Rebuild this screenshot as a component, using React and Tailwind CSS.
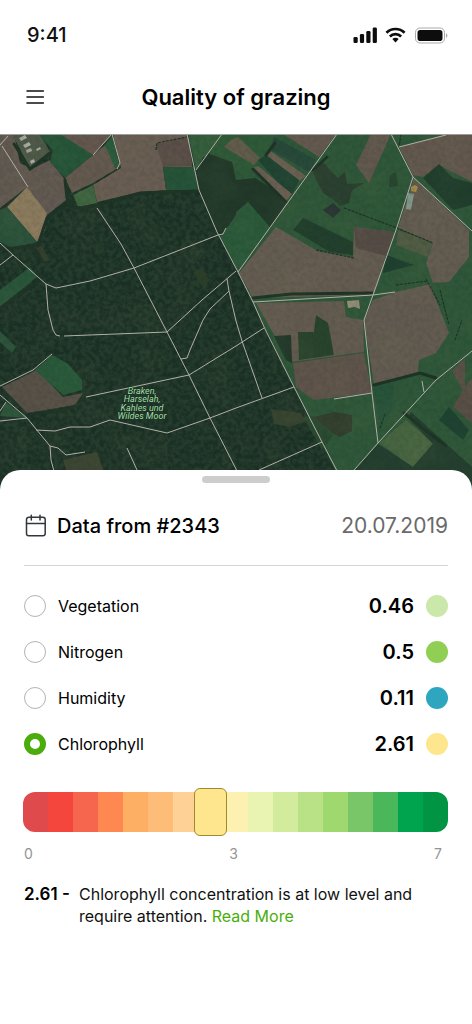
import { useState } from "react";

const readings = [
  { name: "Vegetation", value: "0.46", dot: "bg-[#cae8a9]" },
  { name: "Nitrogen", value: "0.5", dot: "bg-[#91cf54]" },
  { name: "Humidity", value: "0.11", dot: "bg-[#2fa6c0]" },
  { name: "Chlorophyll", value: "2.61", dot: "bg-[#fee68e]" },
];

const scale = [
  "bg-[#df4b4c]", "bg-[#f4463c]", "bg-[#f6664f]", "bg-[#fe8850]", "bg-[#fdb063]",
  "bg-[#fdbd78]", "bg-[#fed196]", "bg-[#fde68e]", "bg-[#fdf1b1]", "bg-[#e9f4b3]",
  "bg-[#d3eb9c]", "bg-[#b9e286]", "bg-[#a0d870]", "bg-[#78c667]", "bg-[#4ab75b]",
  "bg-[#01a44e]", "bg-[#019443]",
];
const selectedStep = 7;

const fields = [
  ["#2f5739", "222,134 472,134 472,490 345,490 294,387 238,272 220,237 236,215 236,183 209,153"],
  ["#635a52", "0,134 14,134 20,163 32,169 50,160 65,180 66,200 47,215 27,187 0,208"],
  ["#4f5949", "12,134 40,134 50,152 30,168"],
  ["#8c7b5e", "27,187 47,213 45,230 37,242 7,207"],
  ["#2a523b", "7,207 37,242 12,248 0,242 0,210"],
  ["#265639", "38,134 63,134 93,155 65,178 50,162 53,150"],
  ["#64574e", "60,134 112,134 93,155"],
  ["#64594f", "93,155 105,145 118,168 93,183 72,193 65,178"],
  ["#2c5c3d", "105,145 112,136 120,167 115,168"],
  ["#6a5e53", "113,134 187,134 192,167 163,167 166,190 140,192 97,202 93,185 121,168"],
  ["#5c5049", "156,144 189,137 192,166 163,167"],
  ["#255339", "163,167 194,167 199,190 166,190"],
  ["#3f6540", "73,195 93,185 97,203 78,207"],
  ["#345e3c", "188,134 222,134 196,170"],
  ["#2f5a38", "222,134 280,134 266,155 245,180 233,165 209,153"],
  ["#625c4b", "231,140 238,137 260,158 254,165 224,147"],
  ["#22392a", "197,170 203,157 212,155 232,162 236,180 255,178 270,187 287,202 270,228 248,202 236,212 222,234 217,230 201,196"],
  ["#2b5a3a", "236,218 248,202 269,226 240,268 221,237"],
  ["#2a563b", "0,290 30,267 37,277 0,307"],
  ["#64594f", "283,134 336,134 319,157"],
  ["#27493a", "274,137 316,160 309,172 271,150"],
  ["#6a5f52", "269,150 306,176 299,181 266,155"],
  ["#1f4332", "258,160 266,155 299,180 291,197"],
  ["#6a5f52", "252,168 258,166 292,194 286,201"],
  ["#62584d", "371,134 391,134 369,183 356,165"],
  ["#2b4030", "313,173 322,161 331,171 338,178 345,172 347,184 364,183 352,190 349,203 340,206 334,200 323,193"],
  ["#293534", "323,210 333,203 341,210 333,218"],
  ["#22402d", "293,230 303,218 320,226 353,242 353,255 330,252"],
  ["#26452f", "390,175 396,172 398,186 389,187"],
  ["#655c51", "276,227 316,250 353,257 354,227 394,232 373,295 253,298 239,273"],
  ["#564c46", "354,227 394,232 386,256 356,248"],
  ["#63584e", "399,147 449,134 472,134 472,182 439,165 423,177 413,175"],
  ["#213e2d", "423,178 439,164 453,178 472,183 472,205 453,210"],
  ["#645c51", "414,178 469,230 469,257 449,282 433,283 426,263 433,243 398,228"],
  ["#505b44", "398,230 433,243 428,257 396,245"],
  ["#1f4030", "386,255 414,265 383,273"],
  ["#645b50", "256,303 344,301 346,317 363,320 364,352 291,362 273,333"],
  ["#5f544b", "293,363 364,353 372,393 314,400 296,387"],
  ["#22392b", "274,336 291,335 292,363 286,360"],
  ["#29442d", "298,332 314,332 316,315 328,323 334,355 299,360"],
  ["#635b51", "373,300 396,292 430,284 449,333 436,353 419,360 418,373 374,385 364,320"],
  ["#28533b", "374,386 394,382 391,412 379,424"],
  ["#323f2e", "314,417 334,412 352,415 352,431 340,437 333,434"],
  ["#2a4a31", "303,417 314,416 333,435 322,450"],
  ["#476541", "379,443 406,420 433,443 413,467"],
  ["#243f2f", "354,470 378,444 413,467 433,444 408,418 411,412 472,467 472,490 340,490"],
  ["#594f46", "452,371 465,358 465,387 472,378 472,423 453,407 463,390"],
  ["#1f4332", "449,407 469,430 463,440 439,420"],
  ["#585148", "2,387 37,370 63,397 83,393 75,405 27,413"],
  ["#295a3a", "35,370 52,355 67,363 82,380 82,390 63,395"],
  ["#2c563d", "0,416 6,402 27,418"],
  ["#2b533b", "0,331 16,347 12,353 0,342"],
  ["#3d4633", "63,460 97,452 103,470 67,472"],
  ["#35432f", "271,409 300,413 307,421 290,427 274,424"],
  ["#343f2e", "36,248 42,246 49,260 42,262"],
  ["#2b3f2a", "193,272 203,268 209,280 204,290"],
];

const treeLines = [
  "M0 249 12 248 30 246 37 252 43 262",
  "M38 245 47 218 65 205 80 208 97 205 140 193 198 191",
  "M14 144 30 169 50 153",
  "M65 180 67 198 75 208",
  "M253 298 291 294 372 293",
  "M374 385 420 373 436 378",
  "M27 415 60 411 75 406",
  "M253 169 286 202 M266 155 275 143 M313 170 327 157",
  "M404 413 425 430 446 446",
  "M0 308 38 281 48 272",
];

const thinHedges = [
  "M316 250 354 258",
  "M344 208 397 228 433 243",
  "M396 285 427 281 M426 279 440 305",
  "M440 290 449 325 M455 340 462 320",
  "M156 150 157 143 187 137",
  "M385 414 380 428 M401 134 399 147",
];

const roads = [
  "M0 243 13 255 46 284 56 288 90 281 134 268 218 235 223 234 226 228",
  "M97 208 121 244 134 268 167 332 189 375 210 418 236 469 246 490",
  "M187 134 199 190 217 232 238 272 253 302 265 329 294 387 322 442 347 490",
  "M222 134 196 170",
  "M0 145 8 136 M2 146 28 187",
  "M112 134 93 155 M112 134 120 163 117 169",
  "M0 265 13 255",
  "M46 284 48 310 53 330 56 335 60 336 M64 336 167 332 202 300 236 271",
  "M227 279 229 291 236 321 242 341 262 398",
  "M229 291 210 309 203 320 190 350 187 358 181 359",
  "M189 375 236 346 264 328",
  "M86 397 189 375",
  "M210 418 236 408 294 387",
  "M36 430 55 431 70 427 90 427 110 420 167 433 210 418",
  "M0 395 27 418 50 446 51 460 55 475",
  "M50 446 58 448 66 455 85 452",
  "M0 421 27 418 M0 386 33 370 52 354 M6 402 0 411",
  "M127 448 137 470",
  "M259 470 322 442",
  "M337 134 238 272",
  "M391 134 413 177 472 231",
  "M413 177 396 230 373 295 364 320 372 393 378 443",
  "M399 147 446 135",
  "M253 302 373 295 395 292",
  "M334 399 372 393",
  "M340 486 378 443 436 380 472 351",
  "M424 392 422 381",
];

function SatelliteMap() {
  return (
    <svg
      className="block w-full"
      viewBox="0 134 472 356"
      role="img"
      aria-label="Satellite map of the pasture"
    >
      <defs>
        <filter id="canopy" x="0" y="0" width="100%" height="100%" colorInterpolationFilters="sRGB">
          <feTurbulence type="fractalNoise" baseFrequency="0.22" numOctaves="4" seed="8" />
          <feColorMatrix values="0 0 0 0 0.05  0 0 0 0 0.12  0 0 0 0 0.09  3 1.5 0 0 -1.8" />
        </filter>
        <filter id="soil" x="0" y="0" width="100%" height="100%" colorInterpolationFilters="sRGB">
          <feTurbulence type="fractalNoise" baseFrequency="0.03" numOctaves="3" seed="3" />
          <feColorMatrix values="0 0 0 0 0.55  0 0 0 0 0.55  0 0 0 0 0.38  2 0 0 0 -0.8" />
        </filter>
        <filter id="soften" colorInterpolationFilters="sRGB">
          <feGaussianBlur stdDeviation="0.7" />
        </filter>
      </defs>
      <rect y="134" width="472" height="356" fill="#243b2d" />
      <rect y="134" width="472" height="356" filter="url(#canopy)" opacity="0.35" />
      <g filter="url(#soften)">
        {fields.map(([fill, points], i) => (
          <polygon key={i} fill={fill} points={points} />
        ))}
        <g fill="#a9aca2">
          <path d="M19 138l6-3 2 3-6 3zM23 145l6-3 2 3-6 3zM26 150l5-2 1 3-5 2zM30 161l4-2 1 3-4 2zM36 149l4-2 1 2-4 2z" />
        </g>
        <path d="M411 187l4-2 3 2-2 5-5-1z" fill="#a28a48" />
        <path d="M408 193l6 1-3 16-5-1z" fill="#80988a" />
        <path d="M347 301l12-1 1 9-5-2-7 1z" fill="#958d78" />
        <g fill="none" stroke="#1e3426">
          <g strokeWidth="3" strokeLinecap="round">
            {treeLines.map((d) => (
              <path key={d} d={d} />
            ))}
          </g>
          <g strokeWidth="1.200" strokeDasharray="3 1">
            {thinHedges.map((d) => (
              <path key={d} d={d} />
            ))}
          </g>
        </g>
      </g>
      <rect y="134" width="472" height="356" filter="url(#soil)" opacity="0.08" />
      <rect y="134" width="472" height="356" filter="url(#canopy)" opacity="0.08" />
      <g fill="none" stroke="#b3afa8" strokeWidth="1" strokeLinejoin="round">
        {roads.map((d) => (
          <path key={d} d={d} />
        ))}
      </g>
      <g
        className="font-['Roboto',sans-serif] text-[9px] italic"
        fill="#a3dca5"
        stroke="#1b3325"
        strokeWidth="1"
        paintOrder="stroke"
        textAnchor="middle"
      >
        <text x="142" y="394">Braken,</text>
        <text x="142" y="402">Harselah,</text>
        <text x="142" y="411">Kahles und</text>
        <text x="142" y="419">Wildes Moor</text>
      </g>
      <path d="M0 134.500h472" stroke="#9a9f9b" strokeWidth="1" />
    </svg>
  );
}

function StatusBar() {
  return (
    <div className="flex h-[70px] items-center justify-between pr-6 pl-[27px]">
      <span className="text-xl font-medium text-[#111]">9:41</span>
      <div className="flex items-center gap-2 text-[#0d0d0d]">
        <svg width="24" height="16" viewBox="0 0 24 16" fill="currentColor" aria-hidden="true">
          <rect x="0.500" y="10" width="4.200" height="6" rx="1.300" />
          <rect x="6.900" y="7" width="4.200" height="9" rx="1.300" />
          <rect x="13.300" y="4" width="4.200" height="12" rx="1.300" />
          <rect x="19.700" y="0.500" width="4.200" height="15.500" rx="1.300" />
        </svg>
        <svg width="21" height="16" viewBox="0 0 22 16" aria-hidden="true">
          <g fill="none" stroke="currentColor" strokeWidth="2.800">
            <path d="M1.500 5.700a13.400 13.400 0 0 1 19 0" />
            <path d="M5.100 9.600a8.300 8.300 0 0 1 11.800 0" />
          </g>
          <path d="M7.700 12.300a4.700 4.700 0 0 1 6.600 0L11 15.800z" fill="currentColor" />
        </svg>
        <svg width="34" height="17" viewBox="0 0 34 17" aria-hidden="true">
          <rect x="1.500" y="1" width="29" height="15" rx="4.500" fill="none" stroke="#a9a9a9" />
          <rect x="3.500" y="3" width="25" height="11" rx="2.800" fill="currentColor" />
          <path d="M32 6.200v4.600c1.900-.8 1.900-3.800 0-4.600z" fill="#a9a9a9" />
        </svg>
      </div>
    </div>
  );
}

export default function App() {
  const [selected, setSelected] = useState("Chlorophyll");

  return (
    <div className="min-h-screen bg-white font-['Inter',sans-serif] text-black">
      <StatusBar />
      <header className="grid h-16 grid-cols-[48px_1fr_48px] items-center pb-2.5">
        <button type="button" aria-label="Open menu" className="flex justify-end pr-[3px]">
          <svg width="20" height="16" viewBox="0 0 20 16" stroke="#111" strokeWidth="1.500" strokeLinecap="round" aria-hidden="true">
            <path d="M2 2h16.400M2 8h16.400M2 14h16.400" />
          </svg>
        </button>
        <h1 className="text-center text-[22px] font-semibold">Quality of grazing</h1>
      </header>
      <SatelliteMap />
      <main className="relative -mt-5 rounded-t-[20px] bg-white px-6 pt-1.5 pb-8">
        <div className="mx-auto h-[7px] w-[68px] rounded-full bg-[#cdcdcd]" />
        <div className="mt-2 flex h-[75px] items-center justify-between border-b border-[#d5d5d5] pb-1">
          <h2 className="flex items-center gap-[11px] text-xl font-medium">
            <svg width="22" height="24" viewBox="0 0 22 24" fill="none" stroke="#33363b" strokeWidth="1.500" strokeLinecap="round" aria-hidden="true">
              <rect x="2.500" y="3.200" width="18.700" height="18.500" rx="2.300" />
              <path d="M2.500 9.500h18.700M7.300 1.200v4.800M16 1.200v4.800" />
            </svg>
            Data from #2343
          </h2>
          <time dateTime="2019-07-20" className="text-[21px] text-[#6a6a6a]">20.07.2019</time>
        </div>
        <fieldset className="mt-[17px]" aria-label="Measurements">
          {readings.map(({ name, value, dot }) => (
            <label key={name} className="flex h-[46px] cursor-pointer items-center">
              <input
                type="radio"
                name="measurement"
                checked={selected === name}
                onChange={() => setSelected(name)}
                className="size-[22px] appearance-none rounded-full border border-[#b3b3b3] bg-white checked:border-[6px] checked:border-[#4bad0c]"
              />
              <span className="ml-3 text-base">{name}</span>
              <span className="ml-auto text-xl font-semibold">{value}</span>
              <span className={`ml-3 size-[22px] rounded-full ${dot}`} />
            </label>
          ))}
        </fieldset>
        <div className="-ml-px mt-[25px] flex h-10">
          {scale.map((color, i) => (
            <div key={color} className={`relative flex-1 first:rounded-l-xl last:rounded-r-xl ${color}`}>
              {i === selectedStep && (
                <div className="absolute -inset-1 z-10 rounded-md border border-[#a08a30] bg-[#fde68e]" />
              )}
            </div>
          ))}
        </div>
        <div className="mt-3 flex justify-between pr-1.5 text-sm text-[#949494]">
          <span>0</span>
          <span>3</span>
          <span>7</span>
        </div>
        <div className="mt-[19px] flex text-base leading-[22px]">
          <strong className="w-[55px] shrink-0 text-[17px] font-semibold">2.61 -</strong>
          <p className="max-w-[340px] text-[#111]">
            Chlorophyll concentration is at low level and require attention.{" "}
            <a href="#more" className="inline-block text-[#4bad0c]">Read More</a>
          </p>
        </div>
      </main>
    </div>
  );
}
